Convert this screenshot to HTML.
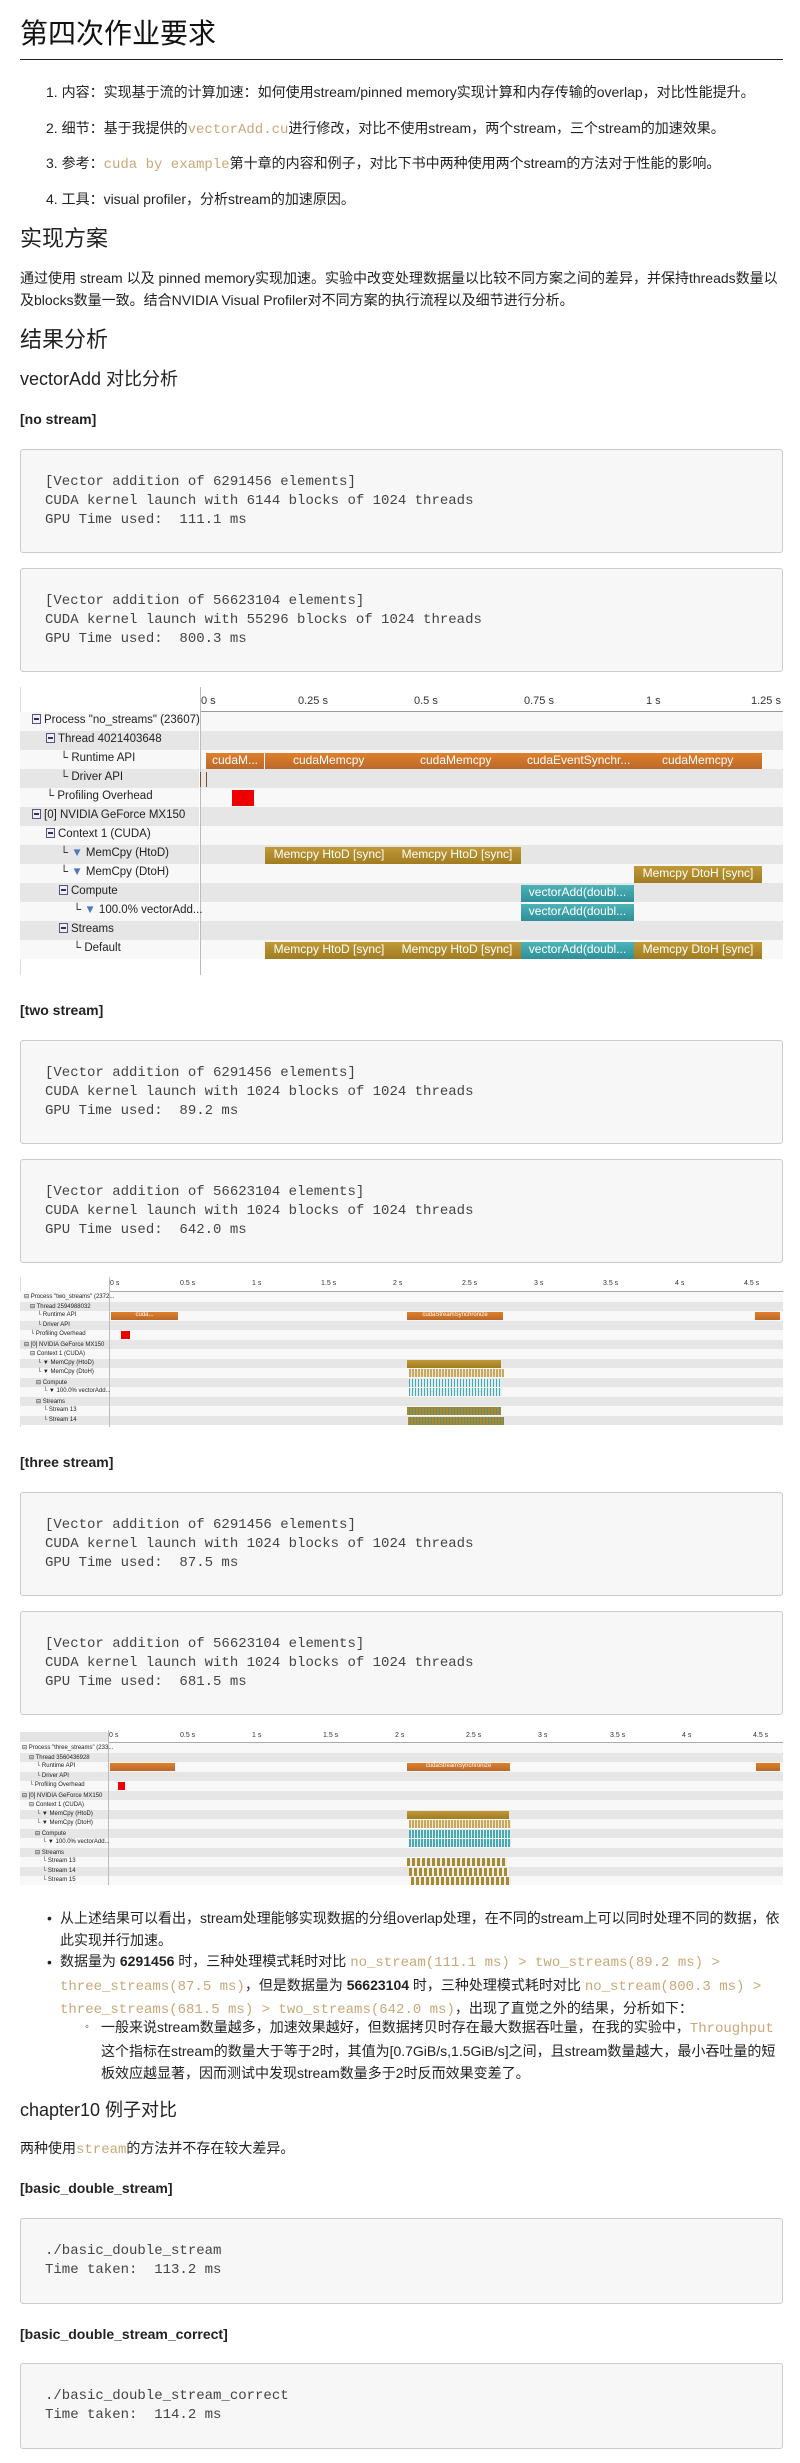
<!DOCTYPE html>
<html><head><meta charset="utf-8">
<style>
*{margin:0;padding:0;box-sizing:border-box}
body{width:800px;height:2463px;background:#fff;position:relative;font-family:"Liberation Sans","Noto Sans CJK SC",sans-serif;color:#222;font-size:14px;overflow:hidden}
.a{position:absolute;white-space:nowrap}
.c{font-family:"Liberation Mono",monospace;color:#c9a877}
.h4{font-weight:bold;font-size:14px;line-height:20px}
pre{position:absolute;left:20px;width:763px;background:#f7f7f7;border:1px solid #ccc;border-radius:3px;font-family:"Liberation Mono",monospace;font-size:14px;line-height:19px;color:#444;padding:23px 0 0 24px}
.tl{position:absolute;left:20px;width:763px;background:#fff;overflow:hidden}
.row{position:absolute;left:0;width:100%}
.l{background:#f8f8f8}.g{background:#e6e6e6}
.lbl{position:absolute;font-size:11.5px;color:#222;white-space:nowrap}
.bx{display:inline-block;width:9px;height:10px;border:1px solid #557;background:#eef;position:relative;vertical-align:-1px;margin-right:3px}
.bx:after{content:"";position:absolute;left:1px;right:1px;top:3px;height:2px;background:#335}
.bar{position:absolute;color:#fff;font-size:12px;overflow:hidden;white-space:nowrap;text-align:center}
.or{background:linear-gradient(#e07f2a,#b9692c)}
.gd{background:linear-gradient(#c09a36,#a07c22)}
.tq{background:linear-gradient(#4cb4b8,#2e8f98)}
.tick{position:absolute;font-size:11px;color:#333}
.s .lbl{font-size:6px}
.s .tick{font-size:7px}
</style></head><body>

<div class="a" style="left:20px;top:14px;font-size:28px;line-height:40px;color:#111">第四次作业要求</div>
<div class="a" style="left:20px;top:59px;width:763px;height:1px;background:#222"></div>

<div class="a" style="left:46px;top:82px;line-height:20px">1. 内容：实现基于流的计算加速：如何使用stream/pinned memory实现计算和内存传输的overlap，对比性能提升。</div>
<div class="a" style="left:46px;top:118px;line-height:20px">2. 细节：基于我提供的<span class="c">vectorAdd.cu</span>进行修改，对比不使用stream，两个stream，三个stream的加速效果。</div>
<div class="a" style="left:46px;top:153px;line-height:20px">3. 参考：<span class="c">cuda by example</span>第十章的内容和例子，对比下书中两种使用两个stream的方法对于性能的影响。</div>
<div class="a" style="left:46px;top:189px;line-height:20px">4. 工具：visual profiler，分析stream的加速原因。</div>

<div class="a" style="left:20px;top:226px;font-size:22px;line-height:26px">实现方案</div>
<div class="a" style="left:20px;top:267px;line-height:22px;white-space:normal;width:765px">通过使用 stream 以及 pinned memory实现加速。实验中改变处理数据量以比较不同方案之间的差异，并保持threads数量以及blocks数量一致。结合NVIDIA Visual Profiler对不同方案的执行流程以及细节进行分析。</div>
<div class="a" style="left:20px;top:327px;font-size:22px;line-height:26px">结果分析</div>
<div class="a" style="left:20px;top:368px;font-size:18px;line-height:22px">vectorAdd 对比分析</div>
<div class="a h4" style="left:20px;top:409px">[no stream]</div>

<pre style="top:449px;height:104px">[Vector addition of 6291456 elements]
CUDA kernel launch with 6144 blocks of 1024 threads
GPU Time used:  111.1 ms</pre>
<pre style="top:568px;height:104px">[Vector addition of 56623104 elements]
CUDA kernel launch with 55296 blocks of 1024 threads
GPU Time used:  800.3 ms</pre>

<!-- timeline 1 -->
<div class="tl" style="top:687px;height:288px">
 <div class="a" style="left:180px;top:0;width:1px;height:288px;background:#bbb"></div>
 <div class="a" style="left:0;top:0;width:1px;height:288px;background:#ddd"></div>
 <div class="tick" style="left:181px;top:8px">0 s</div>
 <div class="tick" style="left:278px;top:8px">0.25 s</div>
 <div class="tick" style="left:394px;top:8px">0.5 s</div>
 <div class="tick" style="left:504px;top:8px">0.75 s</div>
 <div class="tick" style="left:626px;top:8px">1 s</div>
 <div class="tick" style="left:731px;top:8px">1.25 s</div>
 <div class="a" style="left:181px;top:24px;width:582px;height:1px;background:#999"></div>
 <div class="row l" style="top:25px;height:19px"></div>
 <div class="row g" style="top:44px;height:19px"></div>
 <div class="row l" style="top:63px;height:19px"></div>
 <div class="row g" style="top:82px;height:19px"></div>
 <div class="row l" style="top:101px;height:19px"></div>
 <div class="row g" style="top:120px;height:19px"></div>
 <div class="row l" style="top:139px;height:19px"></div>
 <div class="row g" style="top:158px;height:19px"></div>
 <div class="row l" style="top:177px;height:19px"></div>
 <div class="row g" style="top:196px;height:19px"></div>
 <div class="row l" style="top:215px;height:19px"></div>
 <div class="row g" style="top:234px;height:19px"></div>
 <div class="row l" style="top:253px;height:19px"></div>
 <div class="a" style="left:179px;top:25px;width:2px;height:263px;background:#fff"></div>
 <div class="a" style="left:180px;top:0;width:1px;height:288px;background:#bbb"></div>
 <div class="lbl" style="left:12px;top:27px"><span class="bx"></span>Process "no_streams" (23607)</div>
 <div class="lbl" style="left:26px;top:46px"><span class="bx"></span>Thread 4021403648</div>
 <div class="lbl" style="left:40px;top:65px">└ Runtime API</div>
 <div class="lbl" style="left:40px;top:84px">└ Driver API</div>
 <div class="lbl" style="left:26px;top:103px">└ Profiling Overhead</div>
 <div class="lbl" style="left:12px;top:122px"><span class="bx"></span>[0] NVIDIA GeForce MX150</div>
 <div class="lbl" style="left:26px;top:141px"><span class="bx"></span>Context 1 (CUDA)</div>
 <div class="lbl" style="left:40px;top:160px">└ <span style="color:#4a7ab8">▼</span> MemCpy (HtoD)</div>
 <div class="lbl" style="left:40px;top:179px">└ <span style="color:#4a7ab8">▼</span> MemCpy (DtoH)</div>
 <div class="lbl" style="left:39px;top:198px"><span class="bx"></span>Compute</div>
 <div class="lbl" style="left:53px;top:217px">└ <span style="color:#4a7ab8">▼</span> 100.0% vectorAdd...</div>
 <div class="lbl" style="left:39px;top:236px"><span class="bx"></span>Streams</div>
 <div class="lbl" style="left:53px;top:255px">└ Default</div>
 <div class="bar or" style="left:186px;top:66px;width:58px;height:16px">cudaM...</div>
 <div class="bar or" style="left:245px;top:66px;width:497px;height:16px;text-align:left"><span style="position:absolute;left:28px">cudaMemcpy</span><span style="position:absolute;left:155px">cudaMemcpy</span><span style="position:absolute;left:262px">cudaEventSynchr...</span><span style="position:absolute;left:397px">cudaMemcpy</span></div>
 <div class="a" style="left:180px;top:85px;width:1px;height:15px;background:#8a4a1a"></div>
 <div class="a" style="left:186px;top:85px;width:1px;height:15px;background:#8a4a1a"></div>
 <div class="bar" style="left:212px;top:103px;width:22px;height:16px;background:#e00"></div>
 <div class="bar gd" style="left:245px;top:160px;width:128px;height:17px">Memcpy HtoD [sync]</div>
 <div class="bar gd" style="left:373px;top:160px;width:128px;height:17px">Memcpy HtoD [sync]</div>
 <div class="bar gd" style="left:614px;top:179px;width:128px;height:17px">Memcpy DtoH [sync]</div>
 <div class="bar tq" style="left:501px;top:198px;width:113px;height:17px">vectorAdd(doubl...</div>
 <div class="bar tq" style="left:501px;top:217px;width:113px;height:17px">vectorAdd(doubl...</div>
 <div class="bar gd" style="left:245px;top:255px;width:128px;height:17px">Memcpy HtoD [sync]</div>
 <div class="bar gd" style="left:373px;top:255px;width:128px;height:17px">Memcpy HtoD [sync]</div>
 <div class="bar tq" style="left:501px;top:255px;width:113px;height:17px">vectorAdd(doubl...</div>
 <div class="bar gd" style="left:614px;top:255px;width:128px;height:17px">Memcpy DtoH [sync]</div>
</div>

<div class="a h4" style="left:20px;top:1000px">[two stream]</div>
<pre style="top:1040px;height:104px">[Vector addition of 6291456 elements]
CUDA kernel launch with 1024 blocks of 1024 threads
GPU Time used:  89.2 ms</pre>
<pre style="top:1159px;height:104px">[Vector addition of 56623104 elements]
CUDA kernel launch with 1024 blocks of 1024 threads
GPU Time used:  642.0 ms</pre>

<!-- timeline 2 -->
<div class="tl s" style="top:1277px;height:150px">
 <div class="a" style="left:0;top:0;width:1px;height:150px;background:#ddd"></div>
 <div class="tick" style="left:90px;top:3px">0 s</div>
 <div class="tick" style="left:160px;top:3px">0.5 s</div>
 <div class="tick" style="left:232px;top:3px">1 s</div>
 <div class="tick" style="left:301px;top:3px">1.5 s</div>
 <div class="tick" style="left:373px;top:3px">2 s</div>
 <div class="tick" style="left:442px;top:3px">2.5 s</div>
 <div class="tick" style="left:514px;top:3px">3 s</div>
 <div class="tick" style="left:583px;top:3px">3.5 s</div>
 <div class="tick" style="left:655px;top:3px">4 s</div>
 <div class="tick" style="left:724px;top:3px">4.5 s</div>
 <div class="a" style="left:89px;top:14px;width:674px;height:1px;background:#aaa"></div>
 <div class="row l" style="top:15px;height:9.5px"></div>
 <div class="row g" style="top:24.5px;height:9.5px"></div>
 <div class="row l" style="top:34px;height:9.5px"></div>
 <div class="row g" style="top:43.5px;height:9.5px"></div>
 <div class="row l" style="top:53px;height:9.5px"></div>
 <div class="row g" style="top:62.5px;height:9.5px"></div>
 <div class="row l" style="top:72px;height:9.5px"></div>
 <div class="row g" style="top:81.5px;height:9.5px"></div>
 <div class="row l" style="top:91px;height:9.5px"></div>
 <div class="row g" style="top:100.5px;height:9.5px"></div>
 <div class="row l" style="top:110px;height:9.5px"></div>
 <div class="row g" style="top:119.5px;height:9.5px"></div>
 <div class="row l" style="top:129px;height:9.5px"></div>
 <div class="row g" style="top:138.5px;height:9.5px"></div>
 <div class="a" style="left:89px;top:0;width:1px;height:150px;background:#bbb"></div>
 <div class="lbl" style="left:4px;top:16px">⊟ Process "two_streams" (2372...</div>
 <div class="lbl" style="left:10px;top:25.5px">⊟ Thread 2594988032</div>
 <div class="lbl" style="left:17px;top:35px">└ Runtime API</div>
 <div class="lbl" style="left:17px;top:44.5px">└ Driver API</div>
 <div class="lbl" style="left:10px;top:54px">└ Profiling Overhead</div>
 <div class="lbl" style="left:4px;top:63.5px">⊟ [0] NVIDIA GeForce MX150</div>
 <div class="lbl" style="left:10px;top:73px">⊟ Context 1 (CUDA)</div>
 <div class="lbl" style="left:17px;top:82.5px">└ ▼ MemCpy (HtoD)</div>
 <div class="lbl" style="left:17px;top:92px">└ ▼ MemCpy (DtoH)</div>
 <div class="lbl" style="left:16px;top:101.5px">⊟ Compute</div>
 <div class="lbl" style="left:23px;top:111px">└ ▼ 100.0% vectorAdd...</div>
 <div class="lbl" style="left:16px;top:120.5px">⊟ Streams</div>
 <div class="lbl" style="left:23px;top:130px">└ Stream 13</div>
 <div class="lbl" style="left:23px;top:139.5px">└ Stream 14</div>
 <div class="bar or" style="left:91px;top:35px;width:67px;height:8px;font-size:6px">cuda...</div>
 <div class="bar or" style="left:387px;top:35px;width:96px;height:8px;font-size:6px">cudaStreamSynchronize</div>
 <div class="bar or" style="left:735px;top:35px;width:25px;height:8px"></div>
 <div class="bar" style="left:101px;top:54px;width:9px;height:8px;background:#e00"></div>
 <div class="bar gd" style="left:387px;top:82.5px;width:94px;height:8px"></div>
 <div class="bar" style="left:389px;top:92px;width:95px;height:8px;background:repeating-linear-gradient(90deg,#c8a860 0 2px,#f2e8d0 2px 3px)"></div>
 <div class="bar" style="left:389px;top:101.5px;width:93px;height:8px;background:repeating-linear-gradient(90deg,#4aa8b0 0 1px,#dfeff0 1px 3px)"></div>
 <div class="bar" style="left:389px;top:111px;width:93px;height:8px;background:repeating-linear-gradient(90deg,#4aa8b0 0 1px,#dfeff0 1px 3px)"></div>
 <div class="bar" style="left:387px;top:130px;width:94px;height:8px;background:repeating-linear-gradient(90deg,#a88a30 0 2px,#6a8a70 2px 3px)"></div>
 <div class="bar" style="left:388px;top:139.5px;width:96px;height:8px;background:repeating-linear-gradient(90deg,#a88a30 0 2px,#6a8a70 2px 3px)"></div>
</div>

<div class="a h4" style="left:20px;top:1452px">[three stream]</div>
<pre style="top:1492px;height:104px">[Vector addition of 6291456 elements]
CUDA kernel launch with 1024 blocks of 1024 threads
GPU Time used:  87.5 ms</pre>
<pre style="top:1611px;height:104px">[Vector addition of 56623104 elements]
CUDA kernel launch with 1024 blocks of 1024 threads
GPU Time used:  681.5 ms</pre>

<!-- timeline 3 -->
<div class="tl s" style="top:1730px;height:155px">
 <div class="a" style="left:0;top:2px;width:88px;height:10px;background:#e4e4e4"></div>
 <div class="tick" style="left:89px;top:2px">0 s</div>
 <div class="tick" style="left:160px;top:2px">0.5 s</div>
 <div class="tick" style="left:232px;top:2px">1 s</div>
 <div class="tick" style="left:303px;top:2px">1.5 s</div>
 <div class="tick" style="left:375px;top:2px">2 s</div>
 <div class="tick" style="left:446px;top:2px">2.5 s</div>
 <div class="tick" style="left:518px;top:2px">3 s</div>
 <div class="tick" style="left:590px;top:2px">3.5 s</div>
 <div class="tick" style="left:662px;top:2px">4 s</div>
 <div class="tick" style="left:733px;top:2px">4.5 s</div>
 <div class="a" style="left:88px;top:12px;width:675px;height:1px;background:#aaa"></div>
 <div class="row l" style="top:13px;height:9.5px"></div>
 <div class="row g" style="top:22.5px;height:9.5px"></div>
 <div class="row l" style="top:32px;height:9.5px"></div>
 <div class="row g" style="top:41.5px;height:9.5px"></div>
 <div class="row l" style="top:51px;height:9.5px"></div>
 <div class="row g" style="top:60.5px;height:9.5px"></div>
 <div class="row l" style="top:70px;height:9.5px"></div>
 <div class="row g" style="top:79.5px;height:9.5px"></div>
 <div class="row l" style="top:89px;height:9.5px"></div>
 <div class="row g" style="top:98.5px;height:9.5px"></div>
 <div class="row l" style="top:108px;height:9.5px"></div>
 <div class="row g" style="top:117.5px;height:9.5px"></div>
 <div class="row l" style="top:127px;height:9.5px"></div>
 <div class="row g" style="top:136.5px;height:9.5px"></div>
 <div class="row l" style="top:146px;height:9.5px"></div>
 <div class="a" style="left:88px;top:0;width:1px;height:155px;background:#bbb"></div>
 <div class="lbl" style="left:2px;top:14px">⊟ Process "three_streams" (233...</div>
 <div class="lbl" style="left:9px;top:23.5px">⊟ Thread 3560436928</div>
 <div class="lbl" style="left:16px;top:33px">└ Runtime API</div>
 <div class="lbl" style="left:16px;top:42.5px">└ Driver API</div>
 <div class="lbl" style="left:9px;top:52px">└ Profiling Overhead</div>
 <div class="lbl" style="left:2px;top:61.5px">⊟ [0] NVIDIA GeForce MX150</div>
 <div class="lbl" style="left:9px;top:71px">⊟ Context 1 (CUDA)</div>
 <div class="lbl" style="left:16px;top:80.5px">└ ▼ MemCpy (HtoD)</div>
 <div class="lbl" style="left:16px;top:90px">└ ▼ MemCpy (DtoH)</div>
 <div class="lbl" style="left:15px;top:99.5px">⊟ Compute</div>
 <div class="lbl" style="left:22px;top:109px">└ ▼ 100.0% vectorAdd...</div>
 <div class="lbl" style="left:15px;top:118.5px">⊟ Streams</div>
 <div class="lbl" style="left:22px;top:128px">└ Stream 13</div>
 <div class="lbl" style="left:22px;top:137.5px">└ Stream 14</div>
 <div class="lbl" style="left:22px;top:147px">└ Stream 15</div>
 <div class="bar or" style="left:90px;top:33px;width:65px;height:8px"></div>
 <div class="bar or" style="left:387px;top:33px;width:103px;height:8px;font-size:6px">cudaStreamSynchronize</div>
 <div class="bar or" style="left:736px;top:33px;width:24px;height:8px"></div>
 <div class="bar" style="left:98px;top:52px;width:7px;height:8px;background:#e00"></div>
 <div class="bar gd" style="left:387px;top:80.5px;width:102px;height:8px"></div>
 <div class="bar" style="left:389px;top:90px;width:102px;height:8px;background:repeating-linear-gradient(90deg,#c8a860 0 2px,#f2e8d0 2px 3px)"></div>
 <div class="bar" style="left:389px;top:99.5px;width:102px;height:8px;background:repeating-linear-gradient(90deg,#4aa8b0 0 2px,#dfeff0 2px 3px)"></div>
 <div class="bar" style="left:389px;top:109px;width:102px;height:8px;background:repeating-linear-gradient(90deg,#4aa8b0 0 2px,#dfeff0 2px 3px)"></div>
 <div class="bar" style="left:387px;top:128px;width:100px;height:8px;background:repeating-linear-gradient(90deg,#a88a30 0 3px,#eee 3px 5px)"></div>
 <div class="bar" style="left:389px;top:137.5px;width:100px;height:8px;background:repeating-linear-gradient(90deg,#a88a30 0 3px,#eee 3px 5px)"></div>
 <div class="bar" style="left:391px;top:147px;width:100px;height:8px;background:repeating-linear-gradient(90deg,#a88a30 0 3px,#eee 3px 5px)"></div>
</div>

<!-- bullets -->
<div class="a" style="left:47px;top:1907px;line-height:22px">•</div>
<div class="a" style="left:60px;top:1907px;line-height:22px;white-space:normal;width:725px">从上述结果可以看出，stream处理能够实现数据的分组overlap处理，在不同的stream上可以同时处理不同的数据，依此实现并行加速。</div>
<div class="a" style="left:47px;top:1951px;line-height:22px">•</div>
<div class="a" style="left:60px;top:1951px;line-height:21.7px;white-space:normal;width:725px">数据量为 <b>6291456</b> 时，三种处理模式耗时对比 <span class="c">no_stream(111.1 ms) &gt; two_streams(89.2 ms) &gt; three_streams(87.5 ms)</span>，但是数据量为 <b>56623104</b> 时，三种处理模式耗时对比 <span class="c">no_stream(800.3 ms) &gt; three_streams(681.5 ms) &gt; two_streams(642.0 ms)</span>，出现了直觉之外的结果，分析如下：</div>
<div class="a" style="left:85px;top:2016px;line-height:22px;font-size:11px">◦</div>
<div class="a" style="left:101px;top:2016px;line-height:22px;white-space:normal;width:685px">一般来说stream数量越多，加速效果越好，但数据拷贝时存在最大数据吞吐量，在我的实验中，<span class="c">Throughput</span> 这个指标在stream的数量大于等于2时，其值为[0.7GiB/s,1.5GiB/s]之间，且stream数量越大，最小吞吐量的短板效应越显著，因而测试中发现stream数量多于2时反而效果变差了。</div>

<div class="a" style="left:20px;top:2099px;font-size:18px;line-height:22px">chapter10 例子对比</div>
<div class="a" style="left:20px;top:2138px;line-height:20px">两种使用<span class="c">stream</span>的方法并不存在较大差异。</div>
<div class="a h4" style="left:20px;top:2178px">[basic_double_stream]</div>
<pre style="top:2218px;height:86px">./basic_double_stream
Time taken:  113.2 ms</pre>
<div class="a h4" style="left:20px;top:2324px">[basic_double_stream_correct]</div>
<pre style="top:2363px;height:86px">./basic_double_stream_correct
Time taken:  114.2 ms</pre>

</body></html>
